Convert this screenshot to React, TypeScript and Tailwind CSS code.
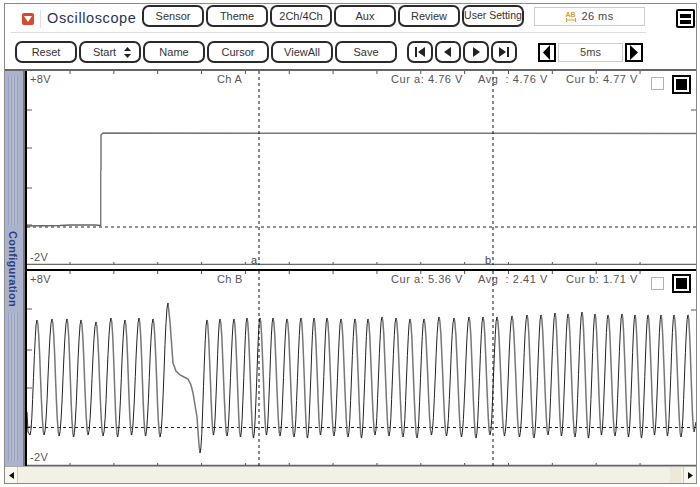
import React from "react";

type Pt = [number, number];

// peaks of channel B, read off the reference
const leftPeaks: Pt[] = [
  [37, 320], [52, 319], [67, 319], [81, 320], [96, 322], [111, 318], [125, 320], [139, 318], [153, 319],
];
const rightPeaks: Pt[] = [
  [207, 320], [220, 319], [234, 319], [247, 318], [260, 318], [273, 318], [287, 319], [301, 318], [314, 318],
  [327, 318], [341, 319], [355, 319], [368, 319], [382, 317], [396, 318], [410, 319], [424, 319], [439, 317],
  [454, 318], [469, 317], [483, 317], [497, 317], [512, 316], [527, 315], [541, 315], [555, 313], [568, 314],
  [582, 312], [595, 314], [608, 315], [622, 314], [635, 315], [648, 315], [661, 315], [674, 315], [688, 315],
];

function cosSeg(a: Pt, b: Pt): Pt[] {
  const out: Pt[] = [];
  for (let i = 0; i <= 8; i++) {
    const t = i / 8;
    const e = (1 - Math.cos(Math.PI * t)) / 2;
    out.push([a[0] + (b[0] - a[0]) * t, a[1] + (b[1] - a[1]) * e]);
  }
  return out;
}

function toPath(pts: Pt[]) {
  return "M" + pts.map((p) => `${p[0].toFixed(1)} ${p[1].toFixed(1)}`).join("L");
}

function buildWave() {
  const rising: string[] = [];
  const falling: string[] = [];
  let prev: Pt = [30, 435];
  rising.push(toPath([[27, 412], [28, 432], [30, 435]]));
  const step = (next: Pt) => {
    const d = toPath(cosSeg(prev, next));
    if (next[1] < prev[1]) rising.push(d);
    else falling.push(d);
    prev = next;
  };
  leftPeaks.forEach((p, i) => {
    step(p);
    const nx = i < leftPeaks.length - 1 ? leftPeaks[i + 1][0] : 168;
    step([(p[0] + nx) / 2 - 0.4, 435 + (i % 3)]);
  });
  step([168, 303]);
  // the glitch: shoulder then deep trough
  falling.push(toPath([[168, 303], [170, 322], [173, 363], [176, 371], [180, 375], [184, 377], [188, 379], [191, 385], [193, 393], [197, 417], [199, 445], [200, 453]]));
  prev = [200, 453];
  rightPeaks.forEach((p, i) => {
    step(p);
    const next = rightPeaks[i + 1];
    if (next) step([(p[0] + next[0]) / 2, 435 + (i % 4)]);
  });
  step([694, 432]);
  step([696, 422]);
  return { rising: rising.join(""), falling: falling.join("") };
}

const wave = buildWave();
const ticksX = Array.from({ length: 14 }, (_, i) => 70 + i * 43.85);

function Btn({ label, w = "w-[62px]", text = "text-[11px]", extra }: { label: string; w?: string; text?: string; extra?: React.ReactNode }) {
  return (
    <div className={`${w} ${text} h-[22px] shrink-0 rounded-[7px] border-2 border-[#2a2a2a] bg-white flex items-center justify-center text-[#333] whitespace-nowrap`}>
      {label}
      {extra}
    </div>
  );
}

function NavBtn({ d }: { d: string }) {
  return (
    <div className="w-[26px] h-[22px] shrink-0 rounded-[7px] border-2 border-[#2a2a2a] bg-white flex items-center justify-center">
      <svg width="12" height="10" viewBox="0 0 12 10">
        <path d={d} fill="#222" />
      </svg>
    </div>
  );
}

function ArrowBox({ d }: { d: string }) {
  return (
    <div className="w-[18px] h-[19px] shrink-0 border-2 border-black bg-white flex items-center justify-center">
      <svg width="12" height="15" viewBox="0 0 12 15">
        <path d={d} fill="#000" />
      </svg>
    </div>
  );
}

function Grid({ top, bottom, leftTicks, rightTick }: { top: number; bottom: number; leftTicks: number[]; rightTick: number }) {
  return (
    <g stroke="#555" strokeWidth="1">
      {ticksX.map((x) => (
        <g key={x}>
          <line x1={x} x2={x} y1={top} y2={top + 3} />
          <line x1={x} x2={x} y1={bottom - 3} y2={bottom} />
        </g>
      ))}
      {leftTicks.map((y) => (
        <line key={y} x1={27} x2={32} y1={y} y2={y} />
      ))}
      <line x1={691} x2={696} y1={rightTick} y2={rightTick} />
      <line x1={27} x2={696} y1={bottom - 0.5} y2={bottom - 0.5} stroke="#666" strokeWidth="1.5" />
    </g>
  );
}

function Readings({ ch, a, avg, b, boxTop }: { ch: string; a: string; avg: string; b: string; boxTop: string }) {
  return (
    <>
      <div className="absolute left-[3px] top-0 text-[11px] text-[#555] tracking-[0.3px]">+8V</div>
      <div className="absolute left-[3px] top-[178px] text-[11px] text-[#555] tracking-[0.3px]">-2V</div>
      <div className="absolute left-[190px] top-0 text-[11px] text-[#555] tracking-[0.3px]">{ch}</div>
      <div className="absolute left-[364px] top-0 text-[11px] text-[#555] tracking-[0.55px]">Cur a: {a} V</div>
      <div className="absolute left-[451px] top-0 text-[11px] text-[#555] tracking-[0.55px]">Avg &nbsp;: {avg} V</div>
      <div className="absolute left-[539px] top-0 text-[11px] text-[#555] tracking-[0.55px]">Cur b: {b} V</div>
      <div className="absolute left-[624px] top-[6px] w-[13px] h-[13px] bg-white border border-[#a9b4cc]" />
      <div className={`absolute left-[645px] ${boxTop} w-[19px] h-[19px] border-2 border-black bg-white flex items-center justify-center`}>
        <div className="w-[11px] h-[11px] bg-black" />
      </div>
    </>
  );
}

export default function App() {
  return (
    <div className="w-[700px] h-[487px] bg-white pt-[3px] px-[4px] font-['Liberation_Sans',Arial,sans-serif] overflow-hidden">
      <div className="w-[693px] h-[481px] border border-[#8a8a8a] flex flex-col">
        {/* toolbar */}
        <div className="h-[67px] shrink-0 border-b-2 border-[#666] flex flex-col relative">
          <div className="flex items-start pt-px h-[28px]">
            <div className="w-[137px] shrink-0 flex items-center h-[23px] pt-[5px]">
              <div className="ml-[17px] w-[12px] h-[12px] rounded-[2px] bg-[#d9492f] flex items-center justify-center">
                <svg width="8" height="6" viewBox="0 0 8 6">
                  <path d="M0 0H8L4 6Z" fill="#fff" />
                </svg>
              </div>
              <div className="ml-[6px] w-px h-[18px] bg-[#ddd]" />
              <div className="ml-[6px] text-[14.5px] tracking-[0.6px] text-[#1f3558] whitespace-nowrap">Oscilloscope</div>
            </div>
            <div className="flex gap-[2px]">
              <Btn label="Sensor" />
              <Btn label="Theme" />
              <Btn label="2Ch/4Ch" />
              <Btn label="Aux" />
              <Btn label="Review" />
              <Btn label="User Setting" text="text-[10.5px]" />
            </div>
            <div className="ml-[10px] mt-[2px] w-[111px] h-[19px] border border-[#ccc] flex items-center justify-center gap-[6px] text-[11px] text-[#444]">
              <div className="flex flex-col items-center leading-none">
                <span className="text-[7px] leading-[7px] text-[#d9a030] font-bold">AB</span>
                <svg width="10" height="4" viewBox="0 0 10 4">
                  <path d="M0.5 0V4M9.5 0V4M1 2H9" stroke="#d9a030" strokeWidth="1" />
                </svg>
              </div>
              <span className="tracking-[0.4px]">26 ms</span>
            </div>
            <div className="ml-[31px] mt-[4px] w-[19px] h-[19px] border-2 border-black rounded-[2px] flex flex-col justify-center gap-[2px] px-[2px]">
              <div className="h-[4px] bg-black" />
              <div className="h-[4px] bg-black" />
            </div>
          </div>
          <div className="ml-[6px] w-[635px] h-px bg-[#ddd]" />
          <div className="flex items-start mt-[8px] pl-[10px]">
            <div className="flex gap-[2px]">
              <Btn label="Reset" />
              <Btn
                label="Start"
                extra={
                  <svg className="ml-[8px] -mr-[4px]" width="7" height="11" viewBox="0 0 7 11">
                    <path d="M3.5 0L7 4H0ZM3.5 11L0 7H7Z" fill="#222" />
                  </svg>
                }
              />
              <Btn label="Name" />
              <Btn label="Cursor" />
              <Btn label="ViewAll" />
              <Btn label="Save" />
            </div>
            <div className="ml-[10px] flex gap-[2px]">
              <NavBtn d="M1 0H3V10H1ZM11 0V10L4 5Z" />
              <NavBtn d="M9 0V10L2 5Z" />
              <NavBtn d="M3 0V10L10 5Z" />
              <NavBtn d="M1 0V10L8 5ZM9 0H11V10H9Z" />
            </div>
            <div className="ml-[21px] mt-[2px] flex gap-[2px] items-center">
              <ArrowBox d="M9 0V15L2 7.5Z" />
              <div className="w-[65px] h-[19px] border border-[#ccc] flex items-center justify-center text-[11px] text-[#444]">5ms</div>
              <ArrowBox d="M2 0V15L10 7.5Z" />
            </div>
          </div>
        </div>

        {/* body */}
        <div className="flex-1 flex min-h-0">
          <div className="w-[20px] shrink-0 border-r-2 border-[#777] bg-[#abb2cc] flex flex-col items-center py-[5px] pr-[2px] gap-[4px]">
            <div className="flex-1 w-[10px] bg-[repeating-linear-gradient(90deg,#98a0bf_0px,#98a0bf_1px,#b4bad2_1px,#b4bad2_3px)]" />
            <div className="h-[80px] flex items-center justify-center">
              <span className="[writing-mode:vertical-rl] text-[11px] font-bold tracking-[0.3px] text-[#2b3f80]">Configuration</span>
            </div>
            <div className="flex-1 w-[10px] bg-[repeating-linear-gradient(90deg,#98a0bf_0px,#98a0bf_1px,#b4bad2_1px,#b4bad2_3px)]" />
          </div>
          <div className="flex-1 min-w-0 flex flex-col border-l-2 border-black">
            {/* channel A */}
            <div className="relative h-[194px] shrink-0">
              <svg width="669" height="194" viewBox="27 71 669 194" className="block">
                <Grid top={71} bottom={265} leftTicks={[110, 148, 188, 225]} rightTick={110} />
                <line x1={27} x2={696} y1={227} y2={227} stroke="#222" strokeDasharray="3 3" />
                <path d="M27 226L60 225.5L70 225L95 225L100.5 225.5" fill="none" stroke="#666" strokeWidth="1.5" />
                <path d="M100.8 226L100.8 170" fill="none" stroke="#444" strokeWidth="1" />
                <path d="M101 170L101 135L103 133L696 133.5" fill="none" stroke="#777" strokeWidth="1.5" />
                <line x1={259} x2={259} y1={71} y2={265} stroke="#111" strokeDasharray="3 3" />
                <line x1={493} x2={493} y1={71} y2={265} stroke="#111" strokeDasharray="3 3" />
                <text x={251} y={264} fontSize="11" fill="#444">a</text>
                <text x={485} y={264} fontSize="11" fill="#444">b</text>
              </svg>
              <Readings ch="Ch A" a="4.76" avg="4.76" b="4.77" boxTop="top-[4px]" />
            </div>
            <div className="h-[6px] shrink-0 border-b-2 border-black" />
            {/* channel B */}
            <div className="relative flex-1 min-h-0">
              <svg width="669" height="195" viewBox="27 271 669 195" className="block">
                <Grid top={271} bottom={466} leftTicks={[309, 350, 388, 427]} rightTick={310} />
                <line x1={27} x2={696} y1={427.5} y2={427.5} stroke="#222" strokeDasharray="3 3" />
                <path d={wave.falling} fill="none" stroke="#777" strokeWidth="1.5" />
                <path d={wave.rising} fill="none" stroke="#222" strokeWidth="1" />
                <line x1={259} x2={259} y1={271} y2={466} stroke="#111" strokeDasharray="3 3" />
                <line x1={493} x2={493} y1={271} y2={466} stroke="#111" strokeDasharray="3 3" />
              </svg>
              <Readings ch="Ch B" a="5.36" avg="2.41" b="1.71" boxTop="top-[3px]" />
            </div>
          </div>
        </div>

        {/* scrollbar */}
        <div className="h-[17px] shrink-0 border-t border-[#aaa] bg-[#f3f1e5] flex">
          <div className="w-[13px] border-r border-[#ccc] bg-[#f7f6ef] flex items-center justify-center">
            <svg width="5" height="7" viewBox="0 0 5 7">
              <path d="M5 0V7L0 3.5Z" fill="#111" />
            </svg>
          </div>
          <div className="flex-1" />
          <div className="w-[11px] bg-[#ece9d8]" />
          <div className="w-[13px] ml-[2px] border-l border-[#ccc] bg-[#f7f6ef] flex items-center justify-center">
            <svg width="5" height="7" viewBox="0 0 5 7">
              <path d="M0 0V7L5 3.5Z" fill="#111" />
            </svg>
          </div>
        </div>
      </div>
    </div>
  );
}
